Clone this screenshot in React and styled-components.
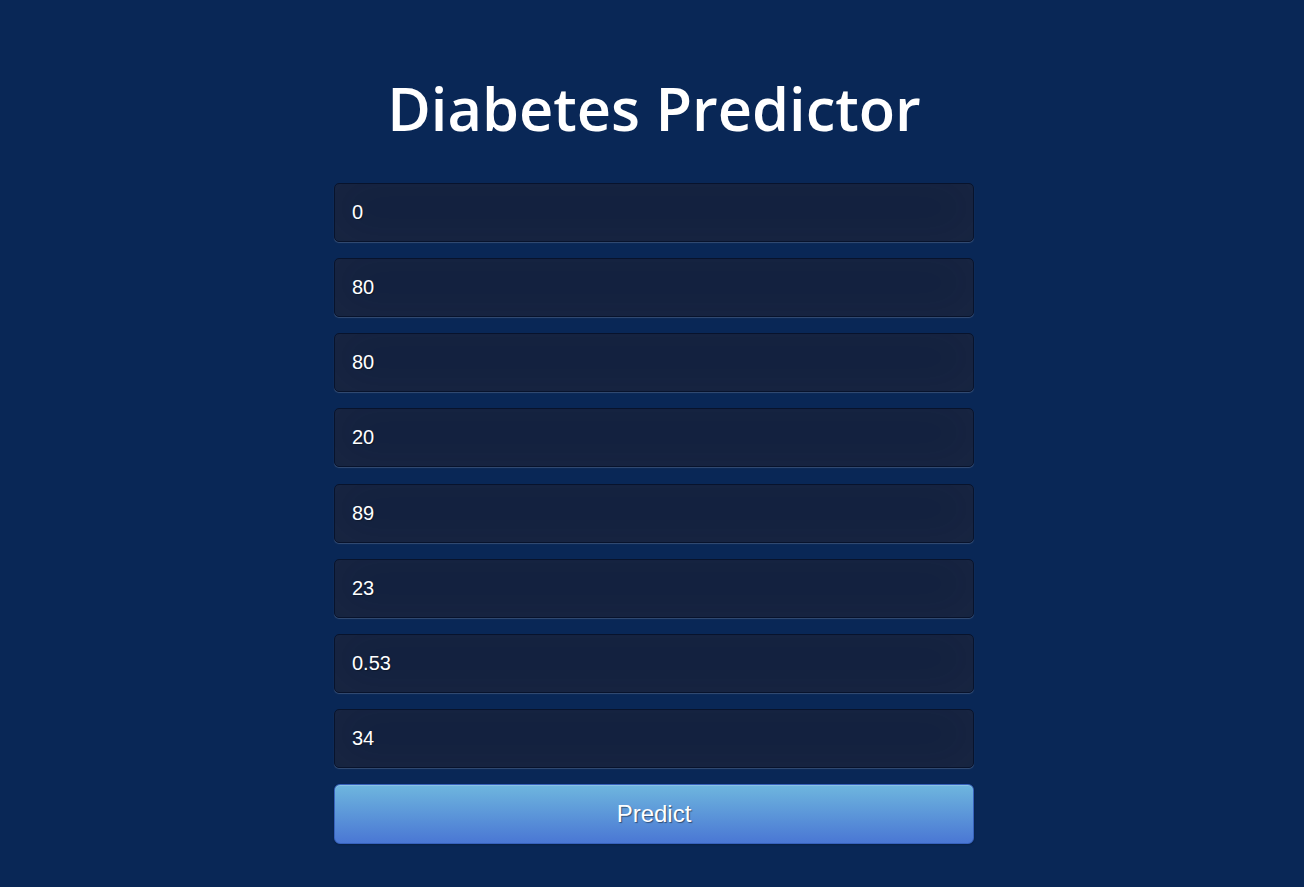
import React from 'react';
import styled, { createGlobalStyle } from 'styled-components';

const GlobalStyle = createGlobalStyle`
  html, body {
    margin: 0;
    padding: 0;
    background: #092756;
    min-height: 100%;
  }
`;

const Page = styled.div`
  min-height: 887px;
  display: flex;
  flex-direction: column;
  align-items: center;
  padding: 72px 0 0 4px;
  box-sizing: border-box;
  background: #092756;
`;

const Title = styled.h1`
  margin: 0 0 39px;
  font-family: "Open Sans", sans-serif;
  font-weight: 600;
  font-size: 59.5px;
  line-height: 72px;
  color: #fff;
`;

const Form = styled.form`
  width: 640px;
  display: flex;
  flex-direction: column;
  gap: 16.15px;
`;

const Field = styled.input`
  box-sizing: border-box;
  width: 100%;
  height: 59px;
  margin: 0;
  padding: 10px 17px;
  background: #13213f;
  border: 1px solid #08132c;
  border-radius: 5px;
  outline: none;
  font-family: "Liberation Sans", Arial, sans-serif;
  font-size: 20px;
  color: #fff;
  text-shadow: 1px 1px 1px rgba(0, 0, 0, 0.3);
  box-shadow: inset 0 -5px 45px rgba(100, 100, 100, 0.08), 0 1px 1px rgba(255, 255, 255, 0.18);
`;

const Button = styled.button`
  box-sizing: border-box;
  width: 100%;
  height: 60px;
  border: 1px solid #3762bc;
  border-radius: 6px;
  background: linear-gradient(to bottom, #6eb6de, #4a77d4);
  color: #fff;
  font-family: "Liberation Sans", Arial, sans-serif;
  font-size: 24px;
  text-shadow: 1px 1px 1px rgba(0, 0, 0, 0.45);
  box-shadow: inset 0 1px 0 rgba(255, 255, 255, 0.2), 0 1px 2px rgba(0, 0, 0, 0.2);
  cursor: pointer;
`;

const values = ['0', '80', '80', '20', '89', '23', '0.53', '34'];

export default function App() {
  return (
    <Page>
      <GlobalStyle />
      <Title>Diabetes Predictor</Title>
      <Form onSubmit={(e) => e.preventDefault()}>
        {values.map((v, i) => (
          <Field key={i} type="text" defaultValue={v} />
        ))}
        <Button type="submit">Predict</Button>
      </Form>
    </Page>
  );
}
